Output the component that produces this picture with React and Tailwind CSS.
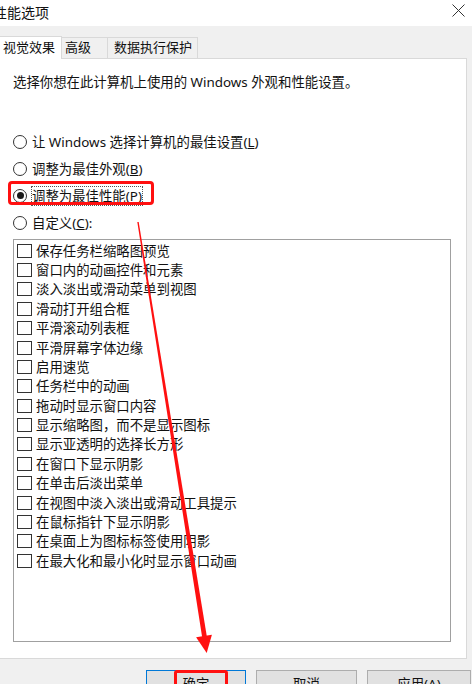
const FONT = { fontFamily: '"Noto Sans", "Noto Sans CJK SC", sans-serif' };

const options = [
  "保存任务栏缩略图预览",
  "窗口内的动画控件和元素",
  "淡入淡出或滑动菜单到视图",
  "滑动打开组合框",
  "平滑滚动列表框",
  "平滑屏幕字体边缘",
  "启用速览",
  "任务栏中的动画",
  "拖动时显示窗口内容",
  "显示缩略图，而不是显示图标",
  "显示亚透明的选择长方形",
  "在窗口下显示阴影",
  "在单击后淡出菜单",
  "在视图中淡入淡出或滑动工具提示",
  "在鼠标指针下显示阴影",
  "在桌面上为图标标签使用阴影",
  "在最大化和最小化时显示窗口动画",
];

const Radio = ({ checked, children }) => (
  <div className="flex items-center h-[27px] pl-[13px]">
    <span className="w-[14px] h-[14px] rounded-full border border-[#333] flex items-center justify-center bg-white">
      {checked && <span className="w-[7px] h-[7px] rounded-full bg-[#1a1a1a]" />}
    </span>
    <span
      className={`ml-[5px] text-[13.4px] leading-[18px] text-[#111] ${
        checked ? 'outline outline-1 outline-dotted outline-[#555]' : ''
      }`}
    >
      {children}
    </span>
  </div>
);

const Check = ({ label }) => (
  <div className="flex items-center h-[19.375px] pl-[3px]">
    <span className="w-[15px] h-[14px] border border-[#333] bg-white flex-shrink-0" />
    <span className="ml-[4px] text-[13.4px] leading-[18px] text-[#111] whitespace-nowrap">{label}</span>
  </div>
);

export default function App() {
  return (
    <div className="relative w-[472px] h-[684px] overflow-hidden bg-[#f0f0f0]" style={FONT}>
      {/* title bar */}
      <div className="h-[26px] bg-white flex items-center justify-between">
        <span className="ml-[-7px] text-[14px] leading-[18px] text-[#111]">性能选项</span>
        <svg className="mr-[7px] mt-[-6px]" width="13" height="13" viewBox="0 0 13 13">
          <path d="M0.5 0.5L12.5 12.5M12.5 0.5L0.5 12.5" stroke="#333" strokeWidth="1" />
        </svg>
      </div>

      {/* tabs */}
      <div className="h-[32px] flex items-end">
        <div className="w-[62px] h-[23px] bg-white border-t border-r border-[#d9d9d9] flex items-center pl-[3px] text-[13px] text-[#111] relative top-[1px]">
          视觉效果
        </div>
        <div className="w-[46px] h-[21px] border-t border-r border-[#d9d9d9] flex items-center pl-[3px] text-[13px] text-[#111]">
          高级
        </div>
        <div className="w-[90px] h-[21px] border-t border-r border-[#d9d9d9] flex items-center pl-[6px] text-[13px] text-[#111]">
          数据执行保护
        </div>
      </div>

      {/* panel */}
      <div className="w-[467px] h-[601px] bg-white border-t border-r border-b border-[#d9d9d9] flex flex-col">
        <p className="mt-[13px] pl-[13px] text-[13.4px] leading-[20px] text-[#111] whitespace-nowrap">
          选择你想在此计算机上使用的 Windows 外观和性能设置。
        </p>

        <div className="mt-[36px] flex flex-col">
          <Radio>
            让 Windows 选择计算机的最佳设置(<span className="underline">L</span>)
          </Radio>
          <Radio>
            调整为最佳外观(<span className="underline">B</span>)
          </Radio>
          <Radio checked>
            调整为最佳性能(<span className="underline">P</span>)
          </Radio>
          <Radio>
            自定义(<span className="underline">C</span>):
          </Radio>
        </div>

        <div className="mt-[3px] ml-[13px] w-[438px] h-[403px] border border-[#a0a0a0] pt-[1px] flex flex-col">
          {options.map((o) => (
            <Check key={o} label={o} />
          ))}
        </div>
      </div>

      {/* buttons */}
      <div className="flex mt-[11px] pl-[146px] gap-[10px]">
        <button className="w-[100px] h-[28px] bg-[#e1e1e1] border border-[#0078d7] text-[13.4px] text-[#111] flex items-center justify-center">
          确定
        </button>
        <button className="w-[101px] h-[28px] bg-[#e1e1e1] border border-[#adadad] text-[13.4px] text-[#111] flex items-center justify-center">
          取消
        </button>
        <button className="w-[104px] h-[28px] bg-[#e1e1e1] border border-[#adadad] text-[13.4px] text-[#111] flex items-center justify-center">
          应用(A)
        </button>
      </div>

      {/* annotations */}
      <div className="absolute left-[8px] top-[181px] w-[146px] h-[24px] border-[3px] border-[#ff1010] rounded-[4px] pointer-events-none" />
      <div className="absolute left-[174px] top-[670px] w-[54px] h-[30px] border-[3px] border-[#ff1010] rounded-[3px] pointer-events-none" />
      <svg className="absolute left-0 top-0 pointer-events-none" width="472" height="684" viewBox="0 0 472 684">
        <polygon points="137.3,222.1 138.7,221.9 207.5,640.4 202.5,639.6" fill="#ff1010" />
        <polygon points="196.1,637.3 211.9,634.7 206.7,653" fill="#ff1010" />
      </svg>
    </div>
  );
}
